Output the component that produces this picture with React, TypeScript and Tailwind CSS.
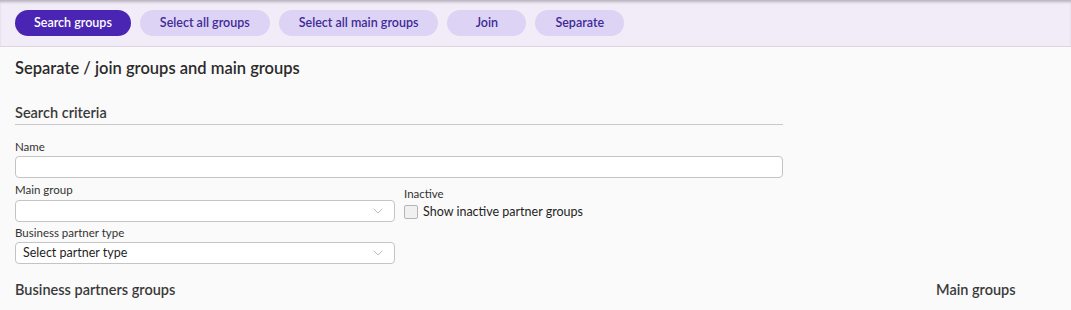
import { ChevronDown } from 'lucide-react';

const actions = ['Search groups', 'Select all groups', 'Select all main groups', 'Join', 'Separate'];

function Select({ placeholder }: { placeholder?: string }) {
  return (
    <div className="flex h-[22px] w-[380px] items-center justify-between rounded border border-[#c4c4c4] bg-white pl-[7px] pr-[8px]">
      <span className="text-[12.5px] leading-none text-[#1f1f1f]">{placeholder}</span>
      <ChevronDown className="h-[16px] w-[16px] text-[#9a9a9a]" strokeWidth={1} />
    </div>
  );
}

export default function App() {
  return (
    <div className="min-h-[310px] bg-[#fafafa] font-['Lato',sans-serif] text-[#2b2b2b]">
      {/* Toolbar */}
      <div className="flex h-[47px] items-center gap-[9px] border-b border-[#dcd6e2] bg-[#f2ecf9] px-[15px] shadow-[inset_0_3px_3px_-1px_rgba(0,0,0,0.25)]">
        {actions.map((label, i) => (
          <button
            key={label}
            className={
              i === 0
                ? 'h-[26px] min-w-[79px] rounded-full bg-[#4a25b4] px-[19px] text-[12.5px] font-semibold text-white'
                : 'h-[26px] min-w-[79px] rounded-full bg-[#ddd3f5] px-[20px] text-[12.5px] font-semibold text-[#3f2a98]'
            }
          >
            {label}
          </button>
        ))}
      </div>

      <main className="px-[15px]">
        <h1 className="pt-[10px] text-[16.5px] font-semibold leading-[22px]">Separate / join groups and main groups</h1>

        <section className="mt-[24px] w-[768px]">
          <h2 className="border-b border-[#c8c8c8] pb-[1px] text-[14.5px] font-semibold leading-[20px] text-[#3a3a3a]">
            Search criteria
          </h2>

          <div className="mt-[16px]">
            <label className="block text-[11.5px] leading-[12px] text-[#333]">Name</label>
            <div className="mt-[3px] h-[22px] rounded border border-[#c4c4c4] bg-white" />
          </div>

          <div className="mt-[6px] flex gap-[9px]">
            <div className="flex flex-col gap-[5px]">
              <div className="flex flex-col gap-[4px]">
                <label className="text-[11.5px] leading-[12px] text-[#333]">Main group</label>
                <Select />
              </div>
              <div className="flex flex-col gap-[3px]">
                <label className="text-[11.5px] leading-[12px] text-[#333]">Business partner type</label>
                <Select placeholder="Select partner type" />
              </div>
            </div>
            <div className="pt-[4px]">
              <label className="block text-[11.5px] leading-[12px] text-[#333]">Inactive</label>
              <label className="mt-[4px] flex items-center gap-[5px] text-[12.5px] leading-[16px] text-[#1f1f1f]">
                <span className="h-[14px] w-[14px] rounded-[2px] border border-[#b5b5b5] bg-[#f0f0f0]" />
                Show inactive partner groups
              </label>
            </div>
          </div>
        </section>

        <div className="mt-[16px] flex">
          <h2 className="w-[921px] text-[14.5px] font-semibold leading-[20px] text-[#3a3a3a]">Business partners groups</h2>
          <h2 className="text-[14.5px] font-semibold leading-[20px] text-[#3a3a3a]">Main groups</h2>
        </div>
      </main>
    </div>
  );
}
